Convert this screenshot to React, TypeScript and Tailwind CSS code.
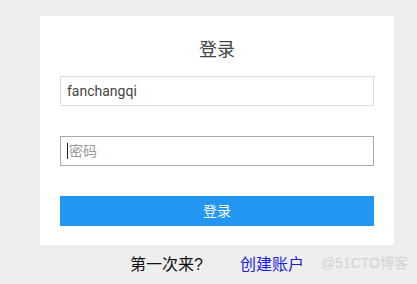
export default function App() {
  const font = { fontFamily: '"Liberation Sans", Arial, "Noto Sans CJK SC", sans-serif' }

  return (
    <div className="relative h-[284px] w-[417px] bg-[#eeeeee] pl-10 pt-4" style={font}>
      {/* login card */}
      <div className="flex w-[354px] flex-col bg-white px-5 pb-[19px] pt-[22px]">
        <h1 className="text-center text-[18px] leading-6 text-[#444]">登录</h1>

        <div className="mt-[14px] flex h-[30px] items-center border border-[#dddddd] px-[6px] font-['Roboto'] text-[14px] text-[#444]">
          fanchangqi
        </div>

        <div className="mt-[30px] flex h-[30px] items-center border border-[#aaaaaa] px-[6px] text-[14px] text-[#999]">
          <span className="mr-px h-4 w-px bg-[#222]" />
          密码
        </div>

        <button className="mt-[30px] h-[30px] bg-[#2196f3] text-[14px] text-white">登录</button>
      </div>

      {/* footer */}
      <div className="mt-[10px] flex w-[354px] justify-center gap-[37px] text-[16px] leading-5">
        <span className="text-[#111]">第一次来?</span>
        <a className="text-[#1c1ce6]">创建账户</a>
      </div>

      <span className="absolute bottom-[10px] right-[9px] text-[14px] text-[#d2d2d2]">@51CTO博客</span>
    </div>
  )
}
